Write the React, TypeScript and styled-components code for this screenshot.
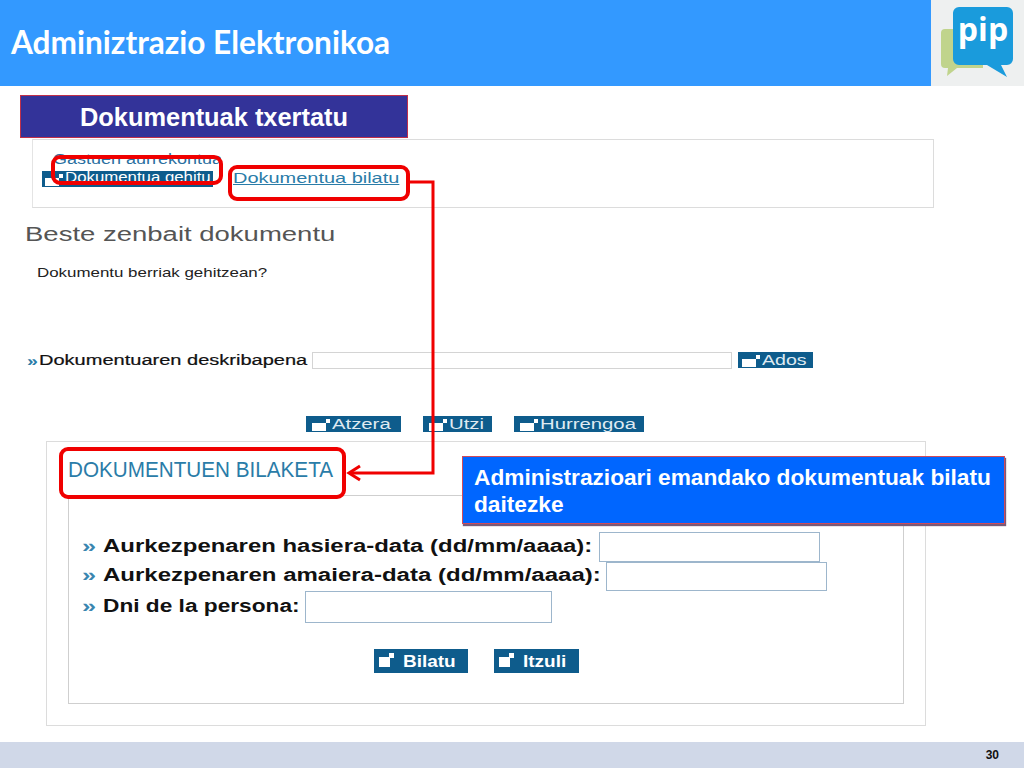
import React from "react";
import styled, { createGlobalStyle } from "styled-components";

const Global = createGlobalStyle`
  html, body { margin: 0; padding: 0; background: #fff; }
  #root { width: 1024px; height: 768px; overflow: hidden; }
`;
const Page = styled.div`
  width: 1024px; height: 768px; display: flex; flex-direction: column;
  font-family: "Liberation Sans", Arial, sans-serif; background: #fff; position: relative; overflow: hidden;
`;
const Stretch = styled.span<{ $sx: number }>`
  display: inline-block; white-space: nowrap; transform-origin: left center; transform: scaleX(${(p) => p.$sx});
`;
const LinkText = styled(Stretch)`
  text-decoration: underline;
`;
const Header = styled.header`
  height: 86px; flex: none; display: flex; background: #3399ff;
`;
const HeaderTitle = styled.h1`
  flex: 1; margin: 0; padding-left: 11px; align-self: center;
  font: 700 31.6px "Lato", "Open Sans", sans-serif; color: #fff; position: relative; top: -1px;
`;
const LogoBox = styled.div`
  width: 93px; height: 86px; background: #eef0f0; flex: none;
`;
const Main = styled.main`
  flex: 1; display: flex; flex-direction: column; align-items: flex-start; padding-top: 9px; min-height: 0;
`;
const TitleBox = styled.div`
  width: 388px; height: 43px; margin-left: 20px; box-sizing: border-box;
  background: #333399; border: 1px solid #c0304a; color: #fff;
  font: 700 25.4px/43px "Liberation Sans", Arial, sans-serif; text-align: center;
`;
const TopPanel = styled.section`
  width: 902px; height: 69px; margin: 1px 0 0 32px; box-sizing: border-box;
  border: 1px solid #dcdcdc; border-left-color: #e4e4e4; display: flex; align-items: flex-start;
  padding: 12px 0 0 9px; gap: 19px;
`;
const TopCol = styled.div`
  display: flex; flex-direction: column; width: 172px; flex: none;
`;
const BudgetTitle = styled.div`
  font: 400 14px/14px "Liberation Sans", sans-serif; color: #2a6f9f; padding-left: 11px; height: 13px;
`;
const AddBtn = styled.div`
  margin-top: 6px; height: 16px; width: 171px; background: #0e5c8c; color: #fff; display: flex; align-items: flex-start;
  font: 400 14px/13px "Liberation Sans", sans-serif; padding-left: 3px; gap: 2px; box-sizing: border-box;
`;
const TopLink = styled.a`
  margin-top: 17px; font: 400 15px/18px "Liberation Sans", sans-serif; color: #2a7ca8;
`;
const SectionTitle = styled.h2`
  margin: 13px 0 0 25px; font: 400 20px/26px "Liberation Sans", sans-serif; color: #555;
`;
const Question = styled.p`
  margin: 18px 0 0 37px; font: 400 13px/16px "Liberation Sans", sans-serif; color: #222;
`;
const DescRow = styled.div`
  display: flex; align-items: center; margin: 70px 0 0 27px; height: 18px;
`;
const Chevrons = styled.span`
  color: #2a7ca8; font-weight: 700; font-size: 15px; width: 12px; flex: none;
`;
const DescLabel = styled.span`
  font: 400 14px/18px "Liberation Sans", sans-serif; color: #111; width: 273px; flex: none;
  -webkit-text-stroke: 0.2px #111;
`;
const DescInput = styled.div`
  width: 420px; height: 17px; box-sizing: border-box; border: 1px solid #d4d4d4; flex: none;
`;
const Btn = styled.div<{ $w: number; $big?: boolean }>`
  width: ${(p) => p.$w}px; height: ${(p) => (p.$big ? 24 : 16)}px; flex: none; box-sizing: border-box;
  background: #0e5c8c; color: ${(p) => (p.$big ? "#fff" : "#dfeaf2")};
  display: flex; align-items: center;
  padding-left: ${(p) => (p.$big ? 5 : 6)}px; gap: ${(p) => (p.$big ? 9 : 2)}px;
  font: ${(p) => (p.$big ? '700 16.5px "Liberation Sans", sans-serif' : '400 14px "Liberation Sans", sans-serif')};
`;
const BtnGlyph = styled.span<{ $big?: boolean }>`
  width: ${(p) => (p.$big ? 15 : 18)}px; height: ${(p) => (p.$big ? 14 : 12)}px; flex: none; position: relative; align-self: flex-end; margin-bottom: ${(p) => (p.$big ? 6 : 1)}px;
  &::before { content: ""; position: absolute; left: 0; bottom: 0; width: ${(p) => (p.$big ? 11 : 14)}px; height: ${(p) => (p.$big ? 10 : 8)}px; background: #fff; }
  &::after { content: ""; position: absolute; right: 0; top: 0; width: ${(p) => (p.$big ? 5 : 4)}px; height: ${(p) => (p.$big ? 5 : 4)}px; background: #fff; }
`;
const AdosBtn = styled(Btn)`
  margin-left: 6px; padding-left: 4px;
`;
const NavRow = styled.div`
  display: flex; gap: 22px; margin: 47px 0 0 306px;
`;
const SearchPanel = styled.section`
  width: 880px; height: 285px; margin: 9px 0 0 46px; box-sizing: border-box; border: 1px solid #dcdcdc;
  display: flex; flex-direction: column; padding: 0 21px 21px 21px;
`;
const SearchTitle = styled.h3`
  margin: 14px 0 0 0; height: 39px; font: 400 22px/28px "Liberation Sans", sans-serif; color: #2a7ca8;
`;
const SearchInner = styled.div`
  flex: 1; box-sizing: border-box; border: 1px solid #cfcfcf; padding: 36px 0 0 13px; display: flex; flex-direction: column;
`;
const FormRow = styled.div<{ $h: number }>`
  display: flex; align-items: center; height: ${(p) => p.$h}px;
`;
const FormLabel = styled.label<{ $w: number }>`
  font: 700 18px/20px "Liberation Sans", sans-serif; color: #111; width: ${(p) => p.$w}px; flex: none; margin-bottom: 3px;
`;
const FormChevrons = styled.span`
  color: #3a86b0; width: 21px; flex: none; font: 700 18px/20px "Liberation Sans", sans-serif; margin-bottom: 3px;
`;
const FormInput = styled.div<{ $w: number; $h: number }>`
  width: ${(p) => p.$w}px; height: ${(p) => p.$h}px; box-sizing: border-box; border: 1px solid #9db6cc; flex: none;
`;
const FormButtons = styled.div`
  display: flex; gap: 26px; margin: 26px 0 0 292px;
`;
const Footer = styled.footer`
  height: 26px; flex: none; background: #d0d8e8; display: flex; align-items: center; justify-content: flex-end;
  padding-right: 25px; font: 700 12px "Liberation Sans", sans-serif; color: #111;
`;
const Callout = styled.div`
  position: absolute; left: 462px; top: 456px; width: 543px; height: 68px; box-sizing: border-box;
  background: #0066ff; border: 1px solid #d04a5a; box-shadow: 1px 2px 1px #7a5a78; color: #fff;
  padding: 7px 6px 7px 11px; font: 700 22.7px/27px "Liberation Sans", sans-serif;
`;
const Mark = styled.div<{ $x: number; $y: number; $w: number; $h: number }>`
  position: absolute; left: ${(p) => p.$x}px; top: ${(p) => p.$y}px; width: ${(p) => p.$w}px; height: ${(p) => p.$h}px;
  box-sizing: border-box; border: 4px solid #f00000; border-radius: 9px;
`;
const ArrowSvg = styled.svg`
  position: absolute; left: 0; top: 0; width: 1024px; height: 768px; pointer-events: none;
`;

const Logo = () => (
  <svg width="93" height="86" viewBox="0 0 93 86">
    <path d="M14 29h38v39H26l-10 8 1-8h-3a4 4 0 0 1-4-4V33a4 4 0 0 1 4-4z" fill="#c0d48c" />
    <path d="M28 7h48a6 6 0 0 1 6 6v46a6 6 0 0 1-6 6h-6l6 12-20-12H28a6 6 0 0 1-6-6V13a6 6 0 0 1 6-6z" fill="#1a9bdc" />
    <text x="52" y="41" textAnchor="middle" fontFamily="'Open Sans', sans-serif" fontWeight="700" fontSize="32" fill="#fff">pip</text>
  </svg>
);

export default function App() {
  return (
    <Page>
      <Global />
      <Header>
        <HeaderTitle>Adminiztrazio Elektronikoa</HeaderTitle>
        <LogoBox><Logo /></LogoBox>
      </Header>
      <Main>
        <TitleBox>Dokumentuak txertatu</TitleBox>
        <TopPanel>
          <TopCol>
            <BudgetTitle><Stretch $sx={1.285}>Gastuen aurrekontua</Stretch></BudgetTitle>
            <AddBtn><BtnGlyph /><Stretch $sx={1.2}>Dokumentua gehitu</Stretch></AddBtn>
          </TopCol>
          <TopLink><LinkText $sx={1.33}>Dokumentua bilatu</LinkText></TopLink>
        </TopPanel>
        <SectionTitle><Stretch $sx={1.375}>Beste zenbait dokumentu</Stretch></SectionTitle>
        <Question><Stretch $sx={1.3}>Dokumentu berriak gehitzean?</Stretch></Question>
        <DescRow>
          <Chevrons><Stretch $sx={1.3}>»</Stretch></Chevrons>
          <DescLabel><Stretch $sx={1.43}>Dokumentuaren deskribapena</Stretch></DescLabel>
          <DescInput />
          <AdosBtn $w={75}><BtnGlyph /><Stretch $sx={1.4}>Ados</Stretch></AdosBtn>
        </DescRow>
        <NavRow>
          <Btn $w={95}><BtnGlyph /><Stretch $sx={1.45}>Atzera</Stretch></Btn>
          <Btn $w={69}><BtnGlyph /><Stretch $sx={1.45}>Utzi</Stretch></Btn>
          <Btn $w={130}><BtnGlyph /><Stretch $sx={1.45}>Hurrengoa</Stretch></Btn>
        </NavRow>
        <SearchPanel>
          <SearchTitle><Stretch $sx={0.94}>DOKUMENTUEN BILAKETA</Stretch></SearchTitle>
          <SearchInner>
            <FormRow $h={30}>
              <FormChevrons><Stretch $sx={1.4}>»</Stretch></FormChevrons>
              <FormLabel $w={496}><Stretch $sx={1.329}>Aurkezpenaren hasiera-data (dd/mm/aaaa):</Stretch></FormLabel>
              <FormInput $w={221} $h={30} />
            </FormRow>
            <FormRow $h={29}>
              <FormChevrons><Stretch $sx={1.4}>»</Stretch></FormChevrons>
              <FormLabel $w={503}><Stretch $sx={1.334}>Aurkezpenaren amaiera-data (dd/mm/aaaa):</Stretch></FormLabel>
              <FormInput $w={221} $h={29} />
            </FormRow>
            <FormRow $h={32}>
              <FormChevrons><Stretch $sx={1.4}>»</Stretch></FormChevrons>
              <FormLabel $w={202}><Stretch $sx={1.26}>Dni de la persona:</Stretch></FormLabel>
              <FormInput $w={247} $h={32} />
            </FormRow>
            <FormButtons>
              <Btn $w={94} $big><BtnGlyph $big /><Stretch $sx={1.15}>Bilatu</Stretch></Btn>
              <Btn $w={85} $big><BtnGlyph $big /><Stretch $sx={1.15}>Itzuli</Stretch></Btn>
            </FormButtons>
          </SearchInner>
        </SearchPanel>
      </Main>
      <Footer>30</Footer>
      <Mark $x={51} $y={155} $w={172} $h={30} />
      <Mark $x={228} $y={165} $w={182} $h={36} />
      <Mark $x={59} $y={447} $w={287} $h={52} />
      <ArrowSvg viewBox="0 0 1024 768">
        <path d="M408 182H433V473H350" fill="none" stroke="#f00000" strokeWidth="3" />
        <path d="M360 466L349 473L360 480" fill="none" stroke="#f00000" strokeWidth="3" />
      </ArrowSvg>
      <Callout>Administrazioari emandako dokumentuak bilatu daitezke</Callout>
    </Page>
  );
}
